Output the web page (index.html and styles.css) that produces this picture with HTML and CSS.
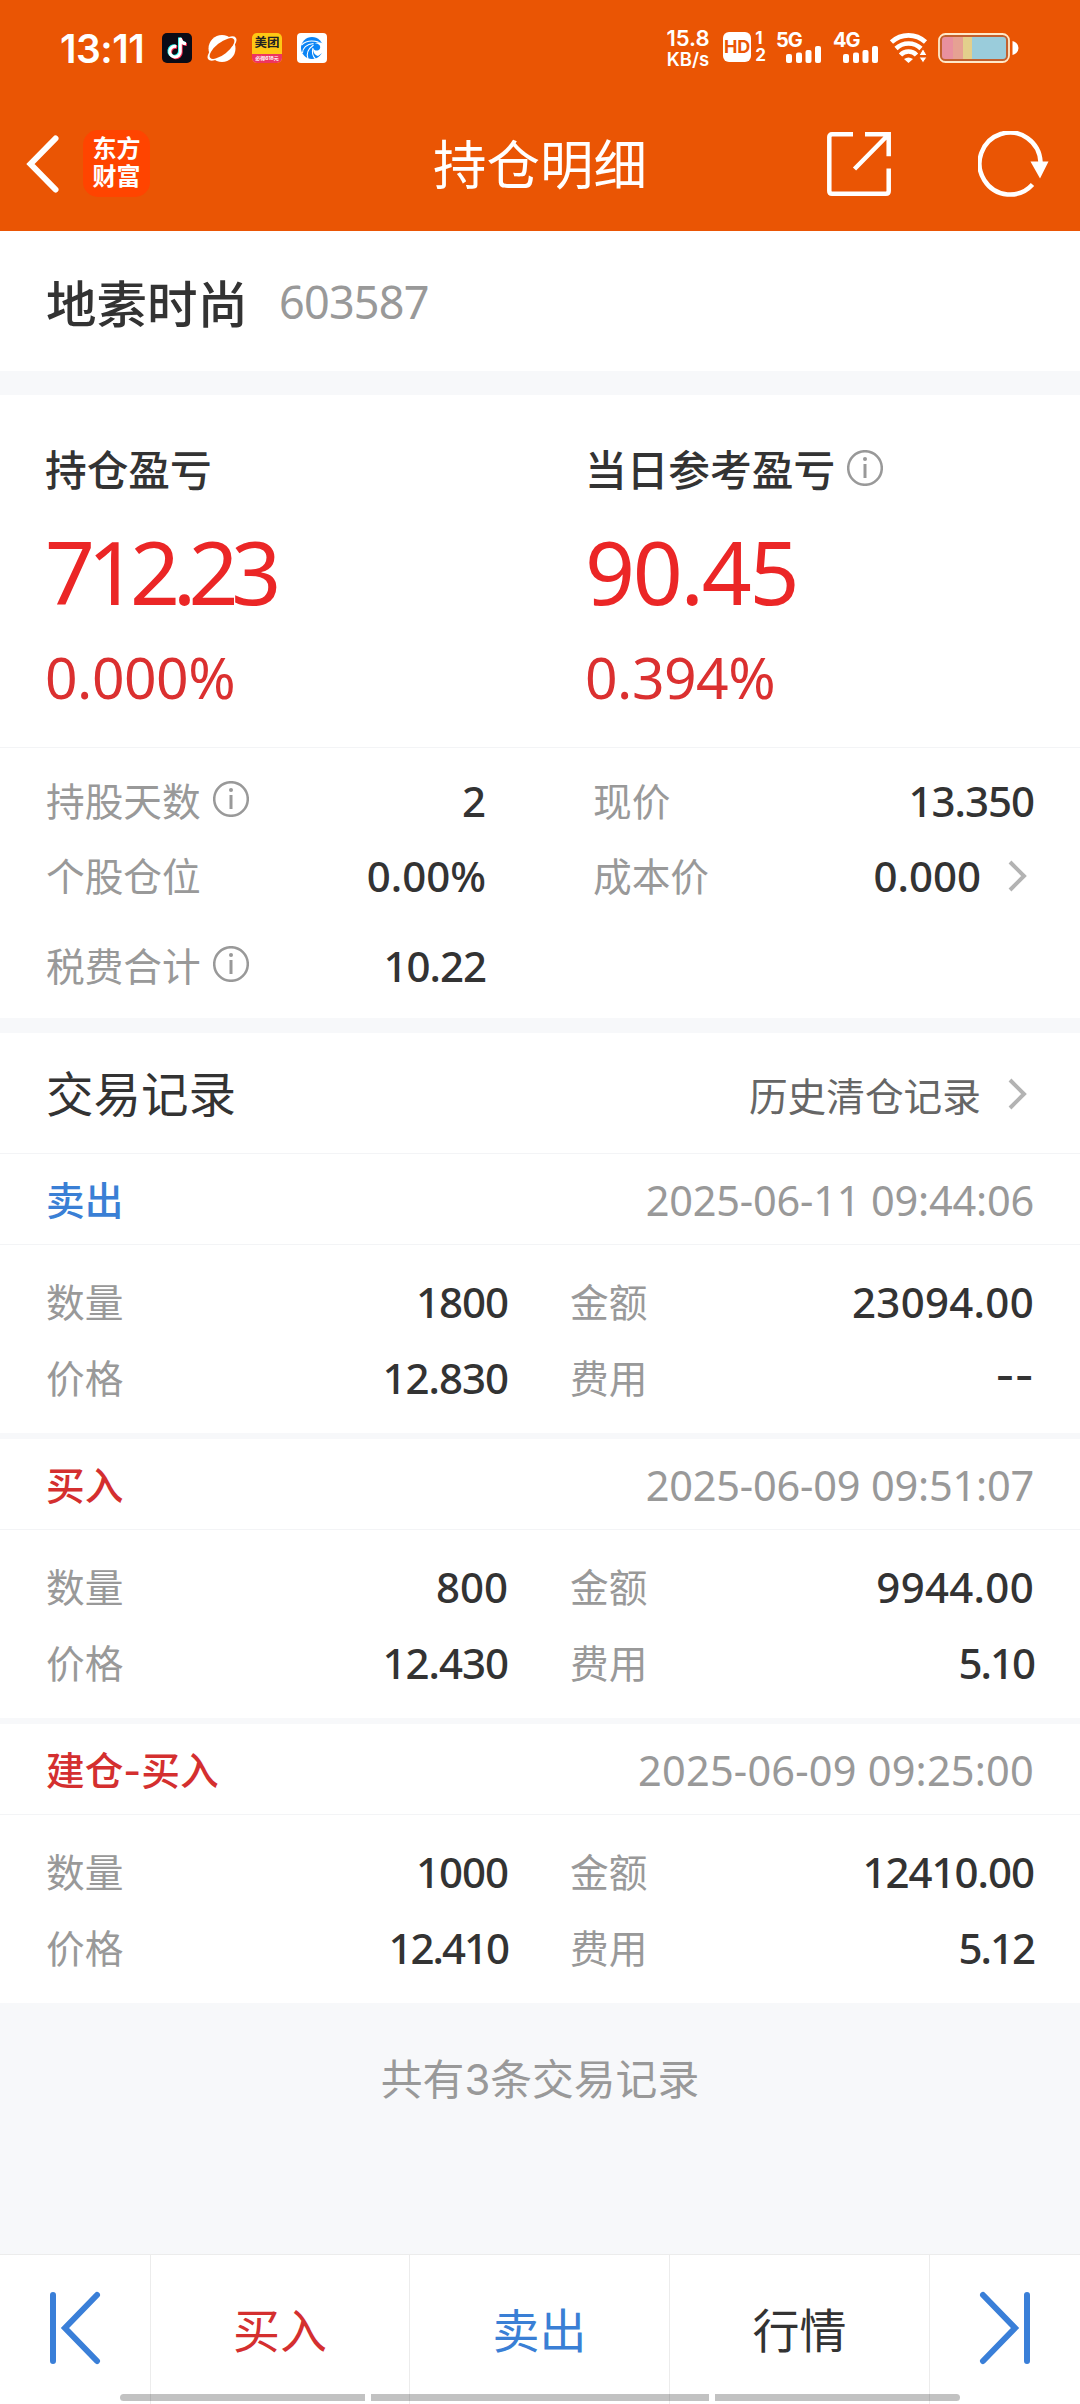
FILE: index.html
```html
<!DOCTYPE html>
<html lang="zh-CN">
<head>
    <meta charset="UTF-8">
    <meta name="viewport" content="width=device-width, initial-scale=1.0">
    <title>持仓明细</title>
    <link rel="stylesheet" href="styles.css">
</head>
<body>
    <header class="header">
        <div class="status-bar">
            <span class="time">13:11</span>
            <svg class="app-icon" viewBox="0 0 30 30">
                <rect width="30" height="30" rx="5" fill="#0b0b16"/>
                <g fill="none" stroke-width="3">
                    <path d="M14.300 13.500a5.300 5.300 0 1 0 4 5.200V5c.3 3.500 2.500 5.400 5.700 5.700" stroke="#fe2c55" transform="translate(.9 .8)"/>
                    <path d="M14.300 13.500a5.300 5.300 0 1 0 4 5.200V5c.3 3.500 2.500 5.400 5.700 5.700" stroke="#25f4ee" transform="translate(-.8 -.6)"/>
                    <path d="M14.300 13.500a5.300 5.300 0 1 0 4 5.200V5c.3 3.500 2.500 5.400 5.700 5.700" stroke="#fff"/>
                </g>
            </svg>
            <svg class="app-icon" viewBox="0 0 30 30">
                <circle cx="15" cy="15.500" r="13.500" fill="#fff"/>
                <ellipse cx="15" cy="15.500" rx="17.500" ry="7" transform="rotate(-38 15 15.500)" fill="#fff"/>
                <ellipse cx="15" cy="15.500" rx="15" ry="6" transform="rotate(-38 15 15.500)" fill="#ea5504"/>
            </svg>
            <span class="app-icon meituan"><b>美团</b><i>必得618元</i></span>
            <svg class="app-icon" viewBox="0 0 30 30">
                <rect width="30" height="30" rx="4" fill="#fff"/>
                <circle cx="15" cy="15" r="11" fill="#0a84f5"/>
                <path d="M27 12c-2-3-6-3.500-9-1.500 1.500-.3 3.500.2 4.500 1.500 1.500 2.500.5 5-2 5.500-2 .3-3.500-.5-4.200-2-.6 3 1 6.500 4.700 7.500l7-5z" fill="#fff"/>
                <path d="M4.500 12c4-4 10-5 17-3M5.500 20c0-5 4-9 11-9.500M11 26c-2-5 0-10 5.500-14M18.500 26c-3-3-4-6-2.500-11" fill="none" stroke="#fff" stroke-width="1.100"/>
            </svg>
            <div class="net-speed">15.8<br><small>KB/s</small></div>
            <div class="hd"><b>HD</b><span>1<br>2</span></div>
            <div class="signal">
                <span>5G</span>
                <svg width="36" height="17" viewBox="0 0 36 17" fill="#fff"><rect y="8" width="6" height="9" rx="2"/><rect x="10" y="6.500" width="6" height="10.500" rx="2"/><rect x="19.500" y="4" width="6" height="13" rx="2"/><rect x="29" width="6" height="17" rx="2"/></svg>
            </div>
            <div class="signal second">
                <span>4G</span>
                <svg width="36" height="17" viewBox="0 0 36 17" fill="#fff"><rect y="8" width="6" height="9" rx="2"/><rect x="10" y="6.500" width="6" height="10.500" rx="2"/><rect x="19.500" y="4" width="6" height="13" rx="2"/><rect x="29" width="6" height="17" rx="2"/></svg>
            </div>
            <svg class="wifi" width="38" height="30" viewBox="0 0 38 30">
                <path d="M1.500 9a25 25 0 0 1 34 0M6 15.500a18 18 0 0 1 25 0M10.500 22a11 11 0 0 1 16 0" fill="none" stroke="#fff" stroke-width="4.600"/>
                <path d="M14 26q4.500-3 9 0l-4.500 4z" fill="#fff"/>
                <path d="M29 22.500l4-7 4 7zM29 24h8l-4 6z" fill="#fff" stroke="#ea5504" stroke-width="1"/>
            </svg>
            <svg class="battery" width="82" height="30" viewBox="0 0 82 30">
                <rect x="1" y="1" width="70" height="28" rx="6.500" fill="#c2602f" stroke="#ffe9c9" stroke-width="1.800"/>
                <path d="M4 7q0-3 3-3h8v22H7q-3 0-3-3z" fill="#e8909f"/>
                <path d="M15 4h10v22H15z" fill="#e6a193"/>
                <path d="M25 4h9v22h-9z" fill="#e3cf8c"/>
                <path d="M34 4h31q3 0 3 3v16q0 3-3 3H34z" fill="#9accdb"/>
                <path d="M74.500 8q6 2 6 7t-6 7z" fill="#fff"/>
            </svg>
        </div>
        <div class="nav">
            <svg class="back" width="34" height="60" viewBox="0 0 34 60"><path d="M29.500 4.500L4.500 30l25 25.500" fill="none" stroke="#fff" stroke-width="6" stroke-linecap="round"/></svg>
            <div class="logo">东方<br>财富</div>
            <h1>持仓明细</h1>
            <svg class="share" width="64" height="64" viewBox="0 0 64 64" fill="none" stroke="#fff" stroke-width="4.500">
                <path d="M26 2.300H5q-2.700 0-2.700 2.700v54q0 2.700 2.700 2.700h54q2.700 0 2.700-2.700V36.500M38 2.300h23.700v22M61 3L27.500 37"/>
            </svg>
            <svg class="refresh" width="74" height="66" viewBox="0 0 74 66">
                <path d="M54.500 53.500A30.500 31 0 1 1 62.500 31" fill="none" stroke="#fff" stroke-width="4.500"/>
                <path d="M52.500 30.500h18L62 47.500z" fill="#fff"/>
            </svg>
        </div>
    </header>

    <section class="stock">
        <h2>地素时尚</h2>
        <span class="code">603587</span>
    </section>

    <section class="profit">
        <div class="profit-item">
            <p class="label">持仓盈亏</p>
            <p class="amount tight">712.23</p>
            <p class="percent">0.000%</p>
        </div>
        <div class="profit-item">
            <p class="label">当日参考盈亏<svg class="info" viewBox="0 0 36 36"><circle cx="18" cy="18" r="16.800"/><path d="M18 14v14"/><circle class="dot" cx="18" cy="9" r="2"/></svg></p>
            <p class="amount">90.45</p>
            <p class="percent">0.394%</p>
        </div>
    </section>

    <section class="stats">
        <div class="row">
            <span class="name">持股天数<svg class="info" viewBox="0 0 36 36"><circle cx="18" cy="18" r="16.800"/><path d="M18 14v14"/><circle class="dot" cx="18" cy="9" r="2"/></svg></span>
            <span class="value">2</span>
            <span class="name">现价</span>
            <span class="value tight">13.350</span>
        </div>
        <div class="row">
            <span class="name">个股仓位</span>
            <span class="value">0.00%</span>
            <span class="name">成本价</span>
            <span class="value">0.000<svg class="arrow" viewBox="0 0 20 34"><path d="M3 3l14 14L3 31"/></svg></span>
        </div>
        <div class="row tax">
            <span class="name">税费合计<svg class="info" viewBox="0 0 36 36"><circle cx="18" cy="18" r="16.800"/><path d="M18 14v14"/><circle class="dot" cx="18" cy="9" r="2"/></svg></span>
            <span class="value tight">10.22</span>
        </div>
    </section>

    <section class="records-head">
        <h3>交易记录</h3>
        <a class="history">历史清仓记录<svg class="arrow" viewBox="0 0 20 34"><path d="M3 3l14 14L3 31"/></svg></a>
    </section>

    <section class="record">
        <div class="record-title"><span class="type sell">卖出</span><span class="date">2025-06-11 09:44:06</span></div>
        <div class="record-body">
            <span class="name">数量</span><span class="value tight">1800</span><span class="name">金额</span><span class="value wide">23094.00</span>
            <span class="name">价格</span><span class="value tight">12.830</span><span class="name">费用</span><span class="value dash">--</span>
        </div>
    </section>
    <section class="record">
        <div class="record-title"><span class="type buy">买入</span><span class="date">2025-06-09 09:51:07</span></div>
        <div class="record-body">
            <span class="name">数量</span><span class="value">800</span><span class="name">金额</span><span class="value wide">9944.00</span>
            <span class="name">价格</span><span class="value tight">12.430</span><span class="name">费用</span><span class="value tighter">5.10</span>
        </div>
    </section>
    <section class="record">
        <div class="record-title"><span class="type buy">建仓-买入</span><span class="date long">2025-06-09 09:25:00</span></div>
        <div class="record-body">
            <span class="name">数量</span><span class="value tight">1000</span><span class="name">金额</span><span class="value tight">12410.00</span>
            <span class="name">价格</span><span class="value tighter">12.410</span><span class="name">费用</span><span class="value tighter">5.12</span>
        </div>
    </section>

    <p class="total">共有3条交易记录</p>

    <footer class="tabs">
        <a class="tab"><svg width="52" height="74" viewBox="0 0 52 74"><path d="M4 4v66M48 4L16 37l32 33"/></svg></a>
        <a class="tab buy">买入</a>
        <a class="tab sell">卖出</a>
        <a class="tab">行情</a>
        <a class="tab"><svg width="52" height="74" viewBox="0 0 52 74"><path d="M48 4v66M4 4l32 33L4 70"/></svg></a>
        <div class="gesture"><i></i><i></i><i></i></div>
    </footer>
</body>
</html>
```
FILE: styles.css
```css
* {
    margin: 0;
    padding: 0;
    box-sizing: border-box;
}

body {
    width: 1080px;
    height: 2404px;
    display: flex;
    flex-direction: column;
    overflow: hidden;
    background: #f7f8fa;
    color: #333;
    font-family: 'Inter', 'Noto Sans CJK SC', sans-serif;
    font-size: 38.700px;
}

h1, h2, h3, i {
    font-weight: 400;
    font-style: normal;
}

section {
    background: #fff;
}

svg {
    display: block;
    flex: none;
}

/* Header */
.header {
    height: 231px;
    background: #ea5504;
    color: #fff;
}

.status-bar {
    height: 96px;
    padding-left: 60px;
    display: flex;
    align-items: center;
}

.time {
    width: 102px;
    font-size: 39px;
    font-weight: 600;
    letter-spacing: -0.5px;
}

.app-icon {
    width: 30px;
    height: 30px;
    margin-right: 15px;
    flex: none;
}

.meituan {
    display: flex;
    flex-direction: column;
    overflow: hidden;
    border-radius: 5px;
    background: #ffc814;
    text-align: center;
    white-space: nowrap;
}

.meituan b {
    height: 21px;
    line-height: 20px;
    font-size: 12.500px;
    color: #222;
}

.meituan i {
    height: 9px;
    line-height: 8px;
    background: #ee3560;
    font-size: 5px;
    font-weight: 700;
}

.net-speed {
    width: 48px;
    margin-left: auto;
    font-size: 22px;
    font-weight: 600;
    line-height: 20px;
    text-align: center;
    white-space: nowrap;
}

.net-speed small {
    font-size: 18.500px;
}

.hd {
    width: 43px;
    margin-left: 11px;
    display: flex;
    gap: 4px;
}

.hd b {
    width: 30px;
    height: 30px;
    border-radius: 6px;
    background: #fff;
    color: #ea5504;
    font-size: 18px;
    line-height: 30px;
    text-align: center;
}

.hd span {
    font-size: 17px;
    font-weight: 700;
    line-height: 17px;
    margin-top: -2px;
}

.signal {
    position: relative;
    width: 45px;
    height: 30px;
    margin-left: 10px;
    font-size: 20px;
    font-weight: 700;
    line-height: 15px;
    letter-spacing: -1px;
}

.signal svg {
    position: absolute;
    left: 10px;
    bottom: 0;
}

.signal.second {
    margin-left: 12px;
}

.wifi {
    margin-left: 12px;
}

.battery {
    margin: 0 60px 0 10px;
}

.nav {
    height: 135px;
    padding: 0 28px 0 26px;
    display: flex;
    align-items: center;
}

.logo {
    width: 67px;
    height: 67px;
    margin-left: 23px;
    padding-top: 5px;
    border-radius: 15px;
    background: #ff4400;
    font-size: 24px;
    font-weight: 700;
    line-height: 28px;
    text-align: center;
}

h1 {
    width: 216px;
    margin-left: 283px;
    padding-top: 5px;
    font-size: 53.500px;
    line-height: 60px;
}

.share {
    margin-left: 178px;
}

.refresh {
    margin-left: auto;
}

/* Stock name */
.stock {
    height: 140px;
    padding: 0 46px;
    display: flex;
    align-items: center;
    gap: 31px;
}

.stock h2 {
    font-size: 50.500px;
    font-weight: 500;
    padding-bottom: 1px;
}

.code, .amount, .percent, .value, .date {
    font-family: 'Noto Sans', 'Noto Sans CJK SC', sans-serif;
}

.code {
    color: #999;
    font-size: 45px;
    letter-spacing: -0.800px;
}

/* Profit */
.profit {
    height: 352px;
    margin-top: 24px;
    padding: 43px 45px 0;
    display: grid;
    grid-template-columns: 540px 1fr;
}

.label {
    height: 62px;
    padding-bottom: 3px;
    display: flex;
    align-items: center;
    font-size: 41.700px;
    font-weight: 500;
}

.info {
    width: 36px;
    height: 36px;
    margin-left: 12px;
    fill: none;
    stroke: #999;
    stroke-width: 2.500;
}

.info path {
    stroke-width: 3;
}

.info .dot {
    fill: #999;
    stroke: none;
}

.amount {
    height: 144px;
    line-height: 142px;
    color: #eb2626;
    font-size: 87.500px;
    letter-spacing: -2.300px;
}

.amount.tight {
    letter-spacing: -7.500px;
}

.percent {
    line-height: 66px;
    color: #db3030;
    font-size: 57px;
    letter-spacing: -0.500px;
}

/* Stats */
.stats {
    height: 271px;
    border-top: 1px solid #f3f4f6;
    padding: 16px 46px 0;
}

.row {
    height: 75px;
    display: grid;
    grid-template-columns: 200px 240px 200px 1fr;
    align-items: center;
}

.row .name:nth-child(3) {
    padding-left: 107px;
}

.row.tax {
    height: 105px;
}

.name {
    padding-bottom: 5px;
    display: flex;
    align-items: center;
    color: #999;
    white-space: nowrap;
}

.value {
    padding-bottom: 2px;
    display: flex;
    align-items: center;
    justify-content: flex-end;
    font-size: 42px;
    font-weight: 500;
}

.value.wide {
    letter-spacing: 0.300px;
}

.value.tight {
    letter-spacing: -1px;
}

.value.tighter {
    letter-spacing: -2px;
}

.value.dash {
    padding-bottom: 6px;
    font-family: 'Inter', sans-serif;
}

.arrow {
    width: 20px;
    height: 34px;
    margin: 0 7px 0 26px;
    fill: none;
    stroke: #b3b3b3;
    stroke-width: 4;
}

/* Records */
.records-head {
    height: 121px;
    margin-top: 15px;
    padding: 0 46px;
    display: flex;
    align-items: center;
    justify-content: space-between;
    border-bottom: 1px solid #f3f4f6;
}

.records-head h3 {
    padding-bottom: 4px;
    font-size: 47.500px;
}

.history {
    padding-top: 2px;
    display: flex;
    align-items: center;
    color: #666;
}

.record {
    height: 279px;
    margin-bottom: 6px;
}

.record-title {
    height: 91px;
    padding: 0 46px;
    display: flex;
    align-items: center;
    justify-content: space-between;
    border-bottom: 1px solid #f3f4f6;
}

.type {
    padding-bottom: 2px;
    font-weight: 500;
}

.date {
    padding-top: 1px;
    color: #999;
    font-size: 41.500px;
    letter-spacing: -0.200px;
}

.date.long {
    letter-spacing: 0.200px;
}

.record-body {
    padding: 19px 46px 0;
    display: grid;
    grid-template-columns: 162px 300px 162px 1fr;
    grid-auto-rows: 76px;
}

.record-body .name:nth-child(4n + 3) {
    padding-left: 62px;
}

.buy {
    color: #d42f2f;
}

.sell {
    color: #3a7fd5;
}

.total {
    margin-top: 40px;
    line-height: 62px;
    color: #999;
    font-size: 41.800px;
    text-align: center;
}

/* Bottom tabs */
.tabs {
    position: relative;
    height: 150px;
    margin-top: auto;
    display: grid;
    grid-template-columns: 151px 259px 260px 260px 150px;
    background: #fff;
    border-top: 1px solid #ececec;
    font-size: 47px;
}

.tab {
    padding-bottom: 4px;
    display: flex;
    align-items: center;
    justify-content: center;
    border-right: 1px solid #ececec;
}

.tab:nth-child(5) {
    border-right: none;
}

.tab svg {
    fill: none;
    stroke: #3a7fd8;
    stroke-width: 6;
    stroke-linecap: round;
}

.gesture {
    position: absolute;
    left: 120px;
    bottom: 3px;
    display: flex;
    gap: 6px;
}

.gesture i {
    width: 245px;
    height: 7px;
    background: rgba(0, 0, 0, 0.24);
}

.gesture i:nth-child(1) {
    border-radius: 4px 0 0 4px;
}

.gesture i:nth-child(2) {
    width: 338px;
}

.gesture i:nth-child(3) {
    border-radius: 0 4px 4px 0;
}
```
